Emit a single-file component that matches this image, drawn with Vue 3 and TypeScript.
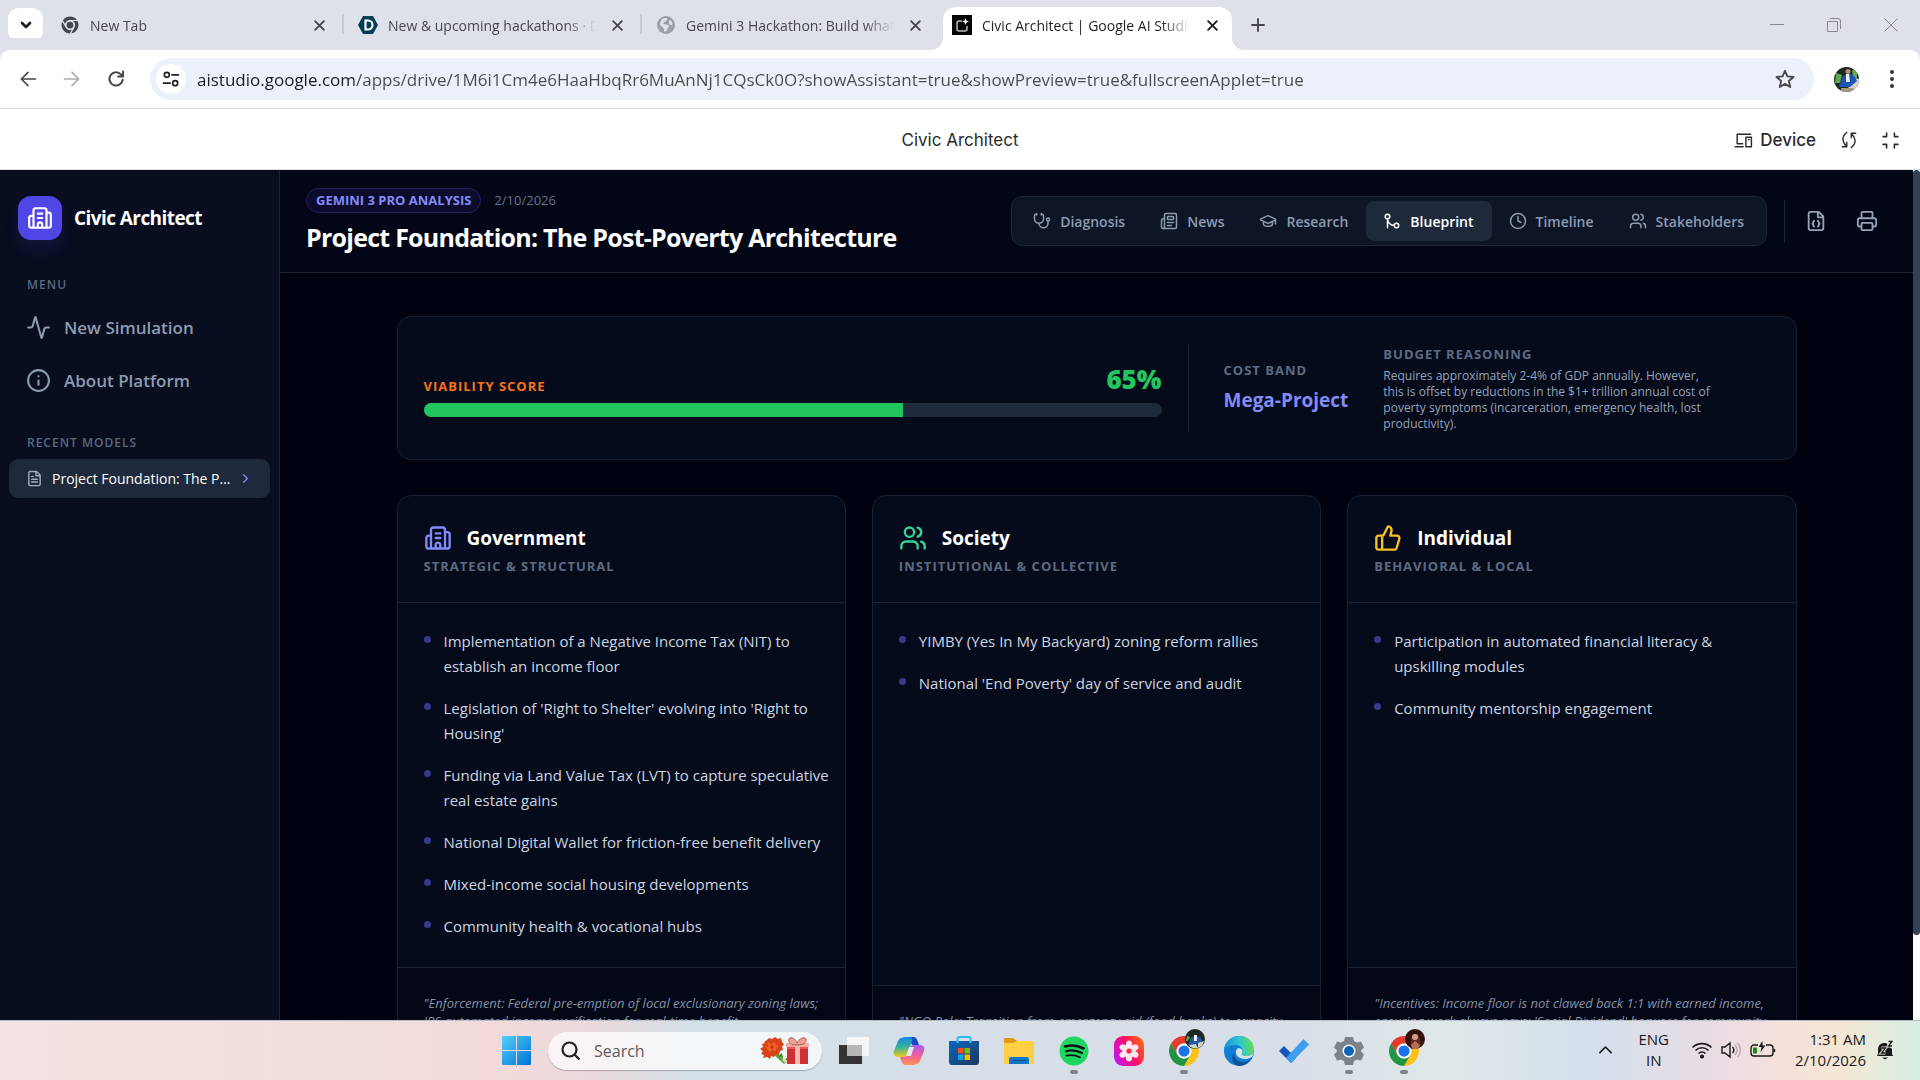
<script setup lang="ts">
import { h } from 'vue'

const ring = (cx: number, cy: number, r: number): string =>
  `M${cx - r} ${cy}a${r} ${r} 0 1 0 ${2 * r} 0a${r} ${r} 0 1 0 ${-2 * r} 0`

const page =
  'M6 22a2 2 0 0 1-2-2V4a2 2 0 0 1 2-2h8a2.4 2.4 0 0 1 1.704.706l3.588 3.588A2.4 2.4 0 0 1 20 8v12a2 2 0 0 1-2 2zM14 2v5a1 1 0 0 0 1 1h5'

const glyphs: Record<string, string> = {
  building:
    'M10 12h4M10 8h4M14 21v-3a2 2 0 0 0-4 0v3M6 10H4a2 2 0 0 0-2 2v7a2 2 0 0 0 2 2h16a2 2 0 0 0 2-2V9a2 2 0 0 0-2-2h-2M6 21V5a2 2 0 0 1 2-2h8a2 2 0 0 1 2 2v16',
  activity:
    'M22 12h-2.48a2 2 0 0 0-1.93 1.46l-2.35 8.36a.25.25 0 0 1-.48 0L9.24 2.18a.25.25 0 0 0-.48 0l-2.35 8.36A2 2 0 0 1 4.49 12H2',
  info: ring(12, 12, 10) + 'M12 16v-4M12 8h.01',
  file: page + 'M10 9H8M16 13H8M16 17H8',
  right: 'm9 18 6-6-6-6',
  stethoscope:
    'M11 2v2M5 2v2M5 3H4a2 2 0 0 0-2 2v4a6 6 0 0 0 12 0V5a2 2 0 0 0-2-2h-1M8 15a6 6 0 0 0 12 0v-3' + ring(20, 10, 2),
  news:
    'M15 18h-5M18 14h-8M4 22h16a2 2 0 0 0 2-2V4a2 2 0 0 0-2-2H8a2 2 0 0 0-2 2v16a2 2 0 0 1-4 0v-9a2 2 0 0 1 2-2h2M11 6h6a1 1 0 0 1 1 1v2a1 1 0 0 1-1 1h-6a1 1 0 0 1-1-1V7a1 1 0 0 1 1-1z',
  cap:
    'M21.42 10.922a1 1 0 0 0-.019-1.838L12.83 5.18a2 2 0 0 0-1.66 0L2.6 9.08a1 1 0 0 0 0 1.832l8.57 3.908a2 2 0 0 0 1.66 0zM22 10v6M6 12.5V16a6 3 0 0 0 12 0v-3.5',
  merge: ring(18, 18, 3) + ring(6, 6, 3) + 'M6 21V9a9 9 0 0 0 9 9',
  clock: ring(12, 12, 10) + 'M12 6v6l4 2',
  users:
    'M16 21v-2a4 4 0 0 0-4-4H6a4 4 0 0 0-4 4v2M16 3.128a4 4 0 0 1 0 7.744M22 21v-2a4 4 0 0 0-3-3.87' + ring(9, 7, 4),
  json:
    page +
    'M10 12a1 1 0 0 0-1 1v1a1 1 0 0 1-1 1 1 1 0 0 1 1 1v1a1 1 0 0 0 1 1M14 18a1 1 0 0 0 1-1v-1a1 1 0 0 1 1-1 1 1 0 0 1-1-1v-1a1 1 0 0 0-1-1',
  printer:
    'M6 18H4a2 2 0 0 1-2-2v-5a2 2 0 0 1 2-2h16a2 2 0 0 1 2 2v5a2 2 0 0 1-2 2h-2M6 9V3a1 1 0 0 1 1-1h10a1 1 0 0 1 1 1v6M7 14h10a1 1 0 0 1 1 1v6a1 1 0 0 1-1 1H7a1 1 0 0 1-1-1v-6a1 1 0 0 1 1-1z',
  thumb:
    'M7 10v12M15 5.88 14 10h5.83a2 2 0 0 1 1.92 2.56l-2.33 8A2 2 0 0 1 17.5 22H4a2 2 0 0 1-2-2v-8a2 2 0 0 1 2-2h2.76a2 2 0 0 0 1.79-1.11L12 2a3.13 3.13 0 0 1 3 3.88Z',
  close: 'M5 5l14 14M19 5L5 19',
  plus: 'M12 4v16M4 12h16',
  down: 'M6 9l6 6 6-6',
  up: 'M3 17l9-9 9 9',
  back: 'M21 12H4M12 4l-8 8 8 8',
  forward: 'M3 12h17M12 4l8 8-8 8',
  reload: 'M20 13a8 8 0 1 1-2-6.500l2 2M20.500 3v6h-6',
  tune: ring(7, 7, 3) + 'M13 7h8M3 17h8' + ring(17, 17, 3),
  star: 'M12 3l2.600 6.200 6.700.6-5.100 4.400 1.500 6.600L12 17.300l-5.700 3.500 1.500-6.600-5.100-4.400 6.700-.6z',
  device: 'M21 4H4v12M1.500 20h10M4 16h7M15 8h7v12h-7zM18 11h1',
  sync: 'M9 2C5 5 3.500 8 4 12c.5 4 2 6 5 8.500M9 15v6H3M15 22c4-3 5.500-6 5-10-.5-4-2-6-5-8.500M15 9V3h6',
  shrink: 'M6.500 1.500v5h-5M17.500 1.500v5h5M6.500 22.500v-5h-5M17.500 22.500v-5h5',
}

const Glyph = (props: { name: string; size: number; weight?: number }) =>
  h(
    'svg',
    {
      width: props.size,
      height: props.size,
      viewBox: '0 0 24 24',
      fill: 'none',
      stroke: 'currentColor',
      'stroke-width': props.weight ?? 2,
      'stroke-linecap': 'round',
      'stroke-linejoin': 'round',
      'aria-hidden': 'true',
    },
    [h('path', { d: glyphs[props.name] })],
  )
Glyph.props = ['name', 'size', 'weight']

const Chrome = (props: { size: number; mono?: boolean }) => {
  const tone = props.mono ? ['#44474b', '#44474b', '#44474b', '#44474b'] : ['#e33b2e', '#fbc116', '#229342', '#1a73e8']
  const edge = props.mono ? { stroke: '#dee1e9', 'stroke-width': 2.5 } : {}
  return h('svg', { width: props.size, height: props.size, viewBox: '4 4 40 40', 'aria-hidden': 'true' }, [
    h('path', { ...edge, fill: tone[0], d: 'M6.68 14A20 20 0 0 1 41.32 14H24A10 10 0 0 0 15.34 29Z' }),
    h('path', { ...edge, fill: tone[1], d: 'M41.32 14A20 20 0 0 1 24 44L32.66 29A10 10 0 0 0 24 14Z' }),
    h('path', { ...edge, fill: tone[2], d: 'M24 44A20 20 0 0 1 6.68 14L15.34 29A10 10 0 0 0 32.66 29Z' }),
    h('circle', { cx: 24, cy: 24, r: 10, fill: props.mono ? '#dee1e9' : '#fff' }),
    h('circle', { cx: 24, cy: 24, r: 7.5, fill: tone[3] }),
  ])
}
Chrome.props = ['size', 'mono']

const browserTabs = [
  { icon: 'chrome', title: 'New Tab', divider: true },
  { icon: 'devpost', title: 'New & upcoming hackathons · Devpost', divider: true },
  { icon: 'globe', title: 'Gemini 3 Hackathon: Build what’s next', divider: false },
  { icon: 'studio', title: 'Civic Architect | Google AI Studio', divider: false, active: true },
]
const address =
  'aistudio.google.com/apps/drive/1M6i1Cm4e6HaaHbqRr6MuAnNj1CQsCk0O?showAssistant=true&showPreview=true&fullscreenApplet=true'

const sections = [
  { icon: 'stethoscope', label: 'Diagnosis' },
  { icon: 'news', label: 'News' },
  { icon: 'cap', label: 'Research' },
  { icon: 'merge', label: 'Blueprint', active: true },
  { icon: 'clock', label: 'Timeline' },
  { icon: 'users', label: 'Stakeholders' },
]

const score = 65

const pillars = [
  {
    key: 'gov',
    icon: 'building',
    title: 'Government',
    subtitle: 'STRATEGIC & STRUCTURAL',
    items: [
      'Implementation of a Negative Income Tax (NIT) to establish an income floor',
      "Legislation of 'Right to Shelter' evolving into 'Right to Housing'",
      'Funding via Land Value Tax (LVT) to capture speculative real estate gains',
      'National Digital Wallet for friction-free benefit delivery',
      'Mixed-income social housing developments',
      'Community health & vocational hubs',
    ],
    note: '"Enforcement: Federal pre-emption of local exclusionary zoning laws; IRS automated income verification for real-time benefit',
  },
  {
    key: 'soc',
    icon: 'users',
    title: 'Society',
    subtitle: 'INSTITUTIONAL & COLLECTIVE',
    items: ['YIMBY (Yes In My Backyard) zoning reform rallies', "National 'End Poverty' day of service and audit"],
    note: '"NGO Role: Transition from emergency aid (food banks) to capacity',
  },
  {
    key: 'ind',
    icon: 'thumb',
    title: 'Individual',
    subtitle: 'BEHAVIORAL & LOCAL',
    items: ['Participation in automated financial literacy & upskilling\u00a0modules', 'Community mentorship engagement'],
    note: "\"Incentives: Income floor is not clawed back 1:1 with earned income, ensuring work always pays; 'Social Dividend' bonuses for community",
  },
]
</script>

<template>
  <div class="screen">
    <div class="tabstrip">
      <button class="tab-search" aria-label="Search tabs"><Glyph name="down" :size="16" :weight="4" /></button>
      <div v-for="tab in browserTabs" :key="tab.title" class="tab" :class="{ active: tab.active, divided: tab.divider }">
        <span class="favicon">
          <Chrome v-if="tab.icon === 'chrome'" :size="18" :mono="true" />
          <svg v-else-if="tab.icon === 'devpost'" width="20" height="20" viewBox="0 0 20 20" aria-hidden="true">
            <path d="M5 1h10l5 9-5 9H5l-5-9z" fill="#003e54" />
            <path d="M7.500 5.500h2.500a4.500 4.500 0 0 1 0 9H7.500z" fill="none" stroke="#fff" stroke-width="2.200" />
          </svg>
          <svg v-else-if="tab.icon === 'globe'" width="18" height="18" viewBox="0 0 18 18" aria-hidden="true">
            <circle cx="9" cy="9" r="9" fill="#9aa0a6" />
            <path d="M8 2c3 0 3 2 1 3S5 7 7 8s5 0 5 2-2 2-2 4-3 2-3 0-1-3-3-4-1-7 4-8zM13 4c2 1 3 4 2 5s-3-1-3-2 0-3 1-3z" fill="#dee1e9" />
          </svg>
          <svg v-else width="20" height="20" viewBox="0 0 20 20" aria-hidden="true">
            <path d="M0 0h20v20H0z" fill="#050505" />
            <path d="M10 6H7a2 2 0 0 0-2 2v6a2 2 0 0 0 2 2h6a2 2 0 0 0 2-2v-3" fill="none" stroke="#bbb" stroke-width="1.500" />
            <path d="M13.500 3l1 2.500L17 6.500l-2.500 1-1 2.500-1-2.500-2.500-1 2.500-1z" fill="#fff" />
          </svg>
        </span>
        <button class="tab-title">{{ tab.title }}</button>
        <button class="tab-close" aria-label="Close tab"><Glyph name="close" :size="15" :weight="3" /></button>
      </div>
      <button class="tab-new" aria-label="New tab"><Glyph name="plus" :size="18" :weight="2.5" /></button>
      <div class="window-controls">
        <button aria-label="Minimize"><svg width="14" height="14"><path d="M0 6.500h14" stroke="#888" /></svg></button>
        <button aria-label="Restore">
          <svg width="14" height="14" fill="none" stroke="#888"><path d="M.5 3.500h10v10H.5zM3 .5h8a2.500 2.500 0 0 1 2.500 2.500v8" /></svg>
        </button>
        <button aria-label="Close"><svg width="14" height="14"><path d="M.5.5l13 13M13.500.5l-13 13" stroke="#888" /></svg></button>
      </div>
    </div>

    <div class="toolbar">
      <button class="tool" aria-label="Back"><Glyph name="back" :size="20" /></button>
      <button class="tool faded" aria-label="Forward"><Glyph name="forward" :size="20" /></button>
      <button class="tool" aria-label="Reload"><Glyph name="reload" :size="20" :weight="2.4" /></button>
      <div class="omnibox">
        <button class="site-info" aria-label="View site information"><Glyph name="tune" :size="20" /></button>
        <input class="address" type="text" aria-label="Address and search bar" :value="address" />
        <button class="star" aria-label="Bookmark this tab"><Glyph name="star" :size="22" /></button>
      </div>
      <button class="profile" aria-label="Profile">
        <svg width="25" height="25" viewBox="0 0 25 25" aria-hidden="true">
          <clipPath id="pf"><circle cx="12.500" cy="12.500" r="12.500" /></clipPath>
          <g clip-path="url(#pf)">
            <path d="M0 0h25v25H0z" fill="#1c2b21" />
            <path d="M2 6l6 2-2 8H1zM18 3h5v8h-4z" fill="#62a84f" />
            <path d="M18 10l7 2v10H14z" fill="#d8d3ce" />
            <path d="M9 9l6-3 6 4 2 4-7 6H5l2-6z" fill="#1c54b4" />
            <path d="M12 7h3l1 8h-4z" fill="#f0f3f8" />
            <circle cx="14" cy="4.500" r="2.500" fill="#b98e70" />
            <path d="M7 21h12v4H7z" fill="#a8977f" />
          </g>
        </svg>
      </button>
      <button class="more" aria-label="Menu">
        <svg width="6" height="20" fill="#333"><circle cx="3" cy="3" r="2" /><circle cx="3" cy="10" r="2" /><circle cx="3" cy="17" r="2" /></svg>
      </button>
    </div>

    <div class="preview-bar">
      <span></span>
      <span class="preview-title">Civic Architect</span>
      <div class="preview-tools">
        <button><Glyph name="device" :size="19" :weight="1.800" />Device</button>
        <button aria-label="Reload preview"><Glyph name="sync" :size="18" :weight="1.900" /></button>
        <button aria-label="Exit full screen"><Glyph name="shrink" :size="17" :weight="2.200" /></button>
      </div>
    </div>

    <div class="app">
      <aside class="sidebar">
        <div class="brand">
          <span class="brand-mark"><Glyph name="building" :size="26" /></span>
          <span>Civic Architect</span>
        </div>
        <h2 class="side-label">MENU</h2>
        <nav class="menu">
          <a href="#new"><Glyph name="activity" :size="25" />New Simulation</a>
          <a href="#about"><Glyph name="info" :size="25" />About Platform</a>
        </nav>
        <h2 class="side-label recent">RECENT MODELS</h2>
        <a class="model" href="#model">
          <Glyph name="file" :size="17" />
          <span>Project Foundation: The Post-Poverty Architecture</span>
          <Glyph name="right" class="model-arrow" :size="15" />
        </a>
      </aside>

      <main class="main">
        <header class="head">
          <div class="head-text">
            <div class="meta">
              <span class="badge">GEMINI 3 PRO ANALYSIS</span>
              <time>2/10/2026</time>
            </div>
            <h1>Project Foundation: The Post-Poverty Architecture</h1>
          </div>
          <div class="head-tools">
            <nav class="sections">
              <button v-for="s in sections" :key="s.label" :class="{ active: s.active }">
                <Glyph :name="s.icon" :size="18" />{{ s.label }}
              </button>
            </nav>
            <div class="exports">
              <button aria-label="Export JSON"><Glyph name="json" :size="22" /></button>
              <button aria-label="Print"><Glyph name="printer" :size="22" /></button>
            </div>
          </div>
        </header>

        <div class="content">
          <section class="summary">
            <div class="score">
              <div class="score-row">
                <span class="score-label">VIABILITY SCORE</span>
                <span class="score-value">{{ score }}%</span>
              </div>
              <div class="track"><div class="fill" :style="{ width: score + '%' }"></div></div>
            </div>
            <div class="cost">
              <div class="band">
                <h3>COST BAND</h3>
                <strong>Mega-Project</strong>
              </div>
              <div class="reason">
                <h3>BUDGET REASONING</h3>
                <p>
                  Requires approximately 2-4% of GDP annually. However,<br />
                  this is offset by reductions in the $1+ trillion annual cost of<br />
                  poverty symptoms (incarceration, emergency health, lost<br />
                  productivity).
                </p>
              </div>
            </div>
          </section>

          <div class="pillars">
            <article v-for="p in pillars" :key="p.key" class="pillar" :class="p.key">
              <header>
                <div class="pillar-title"><Glyph :name="p.icon" :size="28" /><h2>{{ p.title }}</h2></div>
                <p>{{ p.subtitle }}</p>
              </header>
              <ul>
                <li v-for="item in p.items" :key="item">{{ item }}</li>
              </ul>
              <footer>{{ p.note }}</footer>
            </article>
          </div>
        </div>
      </main>
      <div class="scrollbar"><div class="thumb"></div></div>
    </div>

    <div class="taskbar">
      <span></span>
      <div class="dock">
        <button class="slot" aria-label="Start">
          <svg width="29" height="29" viewBox="0 0 29 29">
            <defs><linearGradient id="win" x1="0" y1="0" x2="1" y2="1"><stop stop-color="#52d0fb" /><stop offset="1" stop-color="#0072d4" /></linearGradient></defs>
            <path d="M1 0h13v14H0V1a1 1 0 0 1 1-1zM15 0h13a1 1 0 0 1 1 1v13H15zM0 15h14v14H1a1 1 0 0 1-1-1zM15 15h14v13a1 1 0 0 1-1 1H15z" fill="url(#win)" />
          </svg>
        </button>
        <label class="search">
          <svg width="20" height="20" viewBox="0 0 20 20" fill="none" stroke="#222" stroke-width="2.200" aria-hidden="true"><circle cx="8.500" cy="8.500" r="7" /><path d="M13.500 13.500l5 5" /></svg>
          <input type="text" placeholder="Search" aria-label="Search" />
          <svg width="50" height="28" viewBox="0 0 50 28" aria-hidden="true">
            <path d="M15 14l13 11-3 2-11-10z" fill="#56a637" />
            <path d="M19 19l4-3 1 5zM26 22l4-2-1 6z" fill="#3e8b2b" />
            <path d="M23 23l3-2 2 3-2 2z" fill="#e9dcae" />
            <path d="M5 5l3-2 2-2 3 1 3-2 3 2 3-1 1 4 2 2-2 3 1 3-3 1-1 4-3-1-2 3-3-1-1 3-3-2-4 1 1-3-3-1 2-3-3-2 3-2-1-3 3-1z" fill="#d9431a" />
            <path d="M9 5l3 2 4-2 1 3 3 1-3 2v3l-4-1-3 2-1-3-3-1 3-2z" fill="#ee6026" />
            <path d="M13 8l2 2-2 2-2-2z" fill="#c7330f" />
            <path d="M28 6h21v9H28z" fill="#e8544f" />
            <path d="M28 12h21v15H28z" fill="#cf3036" />
            <path d="M27 6h23v4H27z" fill="#f4aaa0" />
            <path d="M36 6h5v21h-5z" fill="#f7b8ae" />
            <path d="M38 8c-6 0-9-2-8-6 2-3 7 0 8 4 2-4 7-7 9-4 1 4-3 6-9 6z" fill="#f2a196" stroke="#a85f54" />
          </svg>
        </label>
        <button class="slot" aria-label="Task view">
          <svg width="30" height="30" viewBox="0 0 30 30">
            <path d="M0 9h23v19H0z" fill="#333" /><path d="M8 1h22v19H8z" fill="#f6f6f6" /><path d="M8 9h15v11H8z" fill="#b5b6b7" />
          </svg>
        </button>
        <button class="slot" aria-label="Copilot">
          <svg width="32" height="30" viewBox="0 0 32 30">
            <defs>
              <linearGradient id="cpa" x1="0" y1="0" x2="0" y2="1"><stop stop-color="#1a86e8" /><stop offset=".5" stop-color="#36b39a" /><stop offset="1" stop-color="#f3c916" /></linearGradient>
              <linearGradient id="cpb" x1="0" y1="0" x2="0" y2="1"><stop stop-color="#a75cf0" /><stop offset=".5" stop-color="#ee5d9b" /><stop offset="1" stop-color="#fb9552" /></linearGradient>
            </defs>
            <path d="M16 1h4c3 0 4 2 5 5l1 3h-6c-2 0-2-3-4-8z" fill="#1b48c4" />
            <path d="M9 2c1-1 2-1 4-1h4c2 0 3 2 2 4l-4 12c-1 3-2 4-5 4H5c-4 0-5-3-4-6L5 5c1-2 2-3 4-3z" fill="url(#cpa)" />
            <path d="M23 28c-1 1-2 1-4 1h-6c-3 0-4-2-5-5l-1-3h3c3 0 4-1 5-4l2-5c1-3 2-3 5-3h5c4 0 5 3 4 6l-4 10c-1 2-2 3-4 3z" fill="url(#cpb)" />
            <path d="M16 11h5l-3 9h-5z" fill="#e8e6f0" />
          </svg>
        </button>
        <button class="slot" aria-label="Store">
          <svg width="30" height="30" viewBox="0 0 30 30">
            <defs><linearGradient id="sto" x1="0" y1="0" x2="1" y2="1"><stop stop-color="#0669bd" /><stop offset="1" stop-color="#24355e" /></linearGradient></defs>
            <path d="M8.500 7V3a2 2 0 0 1 2-2h9a2 2 0 0 1 2 2v4" fill="none" stroke="#28bdf2" stroke-width="2" />
            <path d="M0 5h30v21a3 3 0 0 1-3 3H3a3 3 0 0 1-3-3z" fill="url(#sto)" />
            <path d="M7.500 5h2v2h-2zM20.500 5h2v2h-2z" fill="#38c7f7" />
            <path d="M9 12h5.500v5.500H9z" fill="#f25022" /><path d="M15.500 12H21v5.500h-5.500z" fill="#7fba00" /><path d="M9 18.500h5.500V24H9z" fill="#00a4ef" /><path d="M15.500 18.500H21V24h-5.500z" fill="#ffb900" />
          </svg>
        </button>
        <button class="slot" aria-label="File Explorer">
          <svg width="30" height="28" viewBox="0 0 30 28">
            <path d="M0 2a1 1 0 0 1 1-1h8l4 3h16v10H0z" fill="#dc9a0d" />
            <path d="M0 6h9l4-2h16a1 1 0 0 1 1 1v22H1a1 1 0 0 1-1-1z" fill="#ffcf45" />
            <path d="M5 27v-5a2 2 0 0 1 2-2h16a2 2 0 0 1 2 2v5z" fill="#1176c9" /><path d="M9 23.500h13" stroke="#0b4e8c" />
          </svg>
        </button>
        <button class="slot running" aria-label="Spotify">
          <svg width="30" height="30" viewBox="0 0 30 30" fill="none" stroke="#111" stroke-linecap="round">
            <circle cx="15" cy="15" r="14.500" fill="#1ed760" stroke="none" />
            <path d="M6 10.500c6-1.700 13-1 18.500 2" stroke-width="2.600" /><path d="M7 15.300c5-1.500 11-.8 16 1.800" stroke-width="2.200" /><path d="M7.500 19.700c5-1.200 9-.6 13.500 1.700" stroke-width="1.800" />
          </svg>
        </button>
        <button class="slot" aria-label="Gallery">
          <svg width="30" height="30" viewBox="0 0 30 30">
            <defs><linearGradient id="gal" x1="0" y1=".7" x2="1" y2=".2"><stop stop-color="#c514e8" /><stop offset=".5" stop-color="#fb0d6c" /><stop offset="1" stop-color="#ff6a0a" /></linearGradient></defs>
            <rect width="30" height="30" rx="9" fill="url(#gal)" />
            <ellipse v-for="n in 6" :key="n" cx="15" cy="9" rx="3.200" ry="4.500" fill="#ffe9ee" :transform="`rotate(${n * 60} 15 15)`" />
            <circle cx="15" cy="15" r="2.600" fill="#fa2a3d" />
          </svg>
        </button>
        <button class="slot running" aria-label="Chrome, first profile">
          <Chrome :size="30" />
          <svg class="who" width="20" height="20" viewBox="0 0 20 20">
            <circle cx="10" cy="10" r="10" fill="#1d2a22" /><path d="M6 9l5-3 5 3 1 4-6 3H3z" fill="#2458ad" /><path d="M9 6h3v6H9z" fill="#eef2f6" /><path d="M13 14l6-2c-1 4-3 6-6 7z" fill="#cfd3c9" /><path d="M4 16l7-1 2 4c-4 1-7 0-9-3z" fill="#cfd3c9" /><path d="M2 7l3 1-2 4H1z" fill="#62a84f" />
          </svg>
        </button>
        <button class="slot" aria-label="Edge">
          <svg width="30" height="30" viewBox="0 0 30 30">
            <defs>
              <linearGradient id="ed" x1="0" y1=".5" x2="1" y2=".4"><stop stop-color="#1b8fdb" /><stop offset=".5" stop-color="#2cc3d2" /><stop offset="1" stop-color="#67e04c" /></linearGradient>
            </defs>
            <circle cx="15" cy="15" r="15" fill="#0f7fd6" />
            <path d="M0 14C1 6 7 0 15 0c9 0 15 6 15 13 0 5-4 7-8 7-3 0-5-1-4-3 1-3 0-7-5-8-5 0-10 1-13 5z" fill="url(#ed)" />
            <path d="M10 17c0 7 6 10 11 9 3-1 5-2 7-4-3 5-8 8-13 8-6-1-9-8-5-13z" fill="#134f91" />
            <path d="M14 12c-3 2-3 8 2 10 4 2 8 1 12-1l2-5c-2 3-5 4-8 4-4 0-5-2-4-3 1-2 0-5-4-5z" fill="#d9e0e8" />
          </svg>
        </button>
        <button class="slot" aria-label="To Do">
          <svg width="30" height="26" viewBox="0 0 30 26"><path d="M0 13l5-5 12 12-5 5z" fill="#1a56b8" /><path d="M7 20L24.500 1 30 6.500 12 25z" fill="#3f9fee" /></svg>
        </button>
        <button class="slot running" aria-label="Settings">
          <svg width="30" height="30" viewBox="0 0 30 30">
            <path d="M11 1h8l1 4 3 1.500 4-1 3 6-3 3v1l3 3-3 6-4-1-3 1.500-1 4h-8l-1-4-3-1.500-4 1-3-6 3-3v-1l-3-3 3-6 4 1L10 5z" fill="#7c838b" />
            <circle cx="15" cy="15" r="6.500" fill="#fff" /><circle cx="15" cy="15" r="5" fill="#0c63b5" />
          </svg>
        </button>
        <button class="slot running" aria-label="Chrome, second profile">
          <Chrome :size="30" />
          <svg class="who" width="20" height="20" viewBox="0 0 20 20">
            <circle cx="10" cy="10" r="10" fill="#33120e" /><path d="M6 20c-1-8 0-14 4-15s6 5 5 13z" fill="#6d2a1c" /><circle cx="10" cy="8" r="3" fill="#d39b80" /><path d="M6 16l4-4 5 4-2 4H8z" fill="#b77158" />
          </svg>
        </button>
      </div>
      <div class="tray">
        <button class="tray-up" aria-label="Show hidden icons"><Glyph name="up" :size="15" :weight="2.600" /></button>
        <button class="lang">ENG<br />IN</button>
        <button class="status" aria-label="Network, volume and battery">
          <svg width="22" height="18" viewBox="0 0 22 18" fill="none" stroke="#1a1a1a" stroke-width="1.600">
            <path d="M1.500 6.500a13.500 13.500 0 0 1 19 0M4.500 9.500a9.200 9.200 0 0 1 13 0M7.500 12.500a5 5 0 0 1 7 0" /><circle cx="11" cy="15.500" r="1.300" fill="#1a1a1a" />
          </svg>
          <svg width="21" height="18" viewBox="0 0 21 18" fill="none" stroke="#1a1a1a" stroke-width="1.400">
            <path d="M1 6h3l5-4v14l-5-4H1zM11.500 6a4 4 0 0 1 0 6" /><path d="M14 4a7 7 0 0 1 0 10M16.500 2a10 10 0 0 1 0 14" stroke="#b5abac" />
          </svg>
          <svg width="26" height="18" viewBox="0 0 26 18" fill="none" stroke="#1a1a1a" stroke-width="1.400">
            <path d="M8 4H4a3 3 0 0 0-3 3v5a3 3 0 0 0 3 3h16a3 3 0 0 0 3-3V7a3 3 0 0 0-3-3h-4M24.500 8v3" /><path d="M3 6.500h4v6H3z" fill="#128a12" stroke="none" /><path d="M12.500 0L8.500 6h3l-1 5 5-6.500h-3z" fill="#1a1a1a" stroke="none" />
          </svg>
        </button>
        <button class="clock">1:31 AM<br />2/10/2026</button>
        <button class="bell" aria-label="Do not disturb">
          <svg width="18" height="20" viewBox="0 0 18 20">
            <path d="M2 14V9a6 6 0 0 1 6-6h2l6 6v5l1 2H1zM6 17.500h6l-3 2z" fill="#1a1a1a" />
            <path d="M5.500 8h4l-4 5h4M12.500 1.500H16L12.500 6H16" fill="none" stroke="#f1ead9" stroke-width="3" /><path d="M5.500 8h4l-4 5h4M12.500 1.500H16L12.500 6H16" fill="none" stroke="#1a1a1a" stroke-width="1.300" />
          </svg>
        </button>
      </div>
    </div>
  </div>
</template>

<style>
body {
  margin: 0;
}
</style>

<style scoped>
.screen {
  display: flex;
  flex-direction: column;
  height: 100vh;
  overflow: hidden;
  background: #fff;
  font-family: 'Open Sans', 'Noto Sans', sans-serif;
}
* {
  box-sizing: border-box;
}
button {
  display: flex;
  align-items: center;
  padding: 0;
  border: 0;
  background: none;
  color: inherit;
  font: inherit;
}
input {
  min-width: 0;
  padding: 0;
  border: 0;
  outline: 0;
  background: none;
  font: inherit;
}
h1, h2, h3, p, ul {
  margin: 0;
  padding: 0;
}
a {
  text-decoration: none;
}
svg {
  flex: none;
}

/* browser tabs */
.tabstrip {
  display: flex;
  align-items: center;
  height: 50px;
  padding-left: 8px;
  background: #dee1e9;
  color: #45474a;
}
.tab-search {
  justify-content: center;
  width: 35px;
  height: 34px;
  margin-right: 3px;
  border-radius: 11px;
  background: #fff;
  color: #1f1f1f;
}
.tab {
  position: relative;
  display: flex;
  flex: 0 1 298px;
  align-items: center;
  gap: 10px;
  min-width: 0;
  height: 50px;
  padding: 0 17px 0 14px;
}
.divided {
  padding-right: 15px;
  border-image: linear-gradient(transparent 14px, #c6c8cc 14px, #c6c8cc 34px, transparent 34px) 1;
  border-right: 2px solid;
}
.favicon {
  display: flex;
  flex: none;
  justify-content: center;
  width: 20px;
}
.tab-title {
  flex: 1;
  overflow: hidden;
  font-size: 14px;
  white-space: nowrap;
  mask-image: linear-gradient(to left, transparent 4px, #000 34px);
}
.active.tab {
  align-self: flex-end;
  flex-basis: 289px;
  height: 43px;
  margin: 0 6px 0 3px;
  padding: 0 12px 7px 9px;
  border-radius: 13px 13px 0 0;
  background: #fff;
  color: #1f1f1f;
}
.active.tab::before,
.active.tab::after {
  position: absolute;
  bottom: 0;
  width: 13px;
  height: 13px;
  content: '';
}
.active.tab::before {
  right: 100%;
  background: radial-gradient(circle at 0 0, transparent 13px, #fff 13px);
}
.active.tab::after {
  left: 100%;
  background: radial-gradient(circle at 100% 0, transparent 13px, #fff 13px);
}
.tab-new {
  margin-left: 11px;
}
.window-controls {
  display: flex;
  gap: 43px;
  margin-left: auto;
  padding-right: 22px;
}

/* address row */
.toolbar {
  display: flex;
  align-items: center;
  height: 59px;
  padding-left: 18px;
  border-bottom: 1px solid #dfdfdf;
  border-radius: 10px 10px 0 0;
  background: #fff;
  box-shadow: 0 -12px 0 #dee1e9;
  color: #474747;
}
.tool {
  margin-right: 24px;
}
.faded {
  color: #ababab;
}
.omnibox {
  display: flex;
  flex: 1;
  align-items: center;
  height: 42px;
  padding: 0 18px 0 6px;
  border-radius: 21px;
  background: #ebf0fa;
}
.site-info {
  justify-content: center;
  width: 30px;
  height: 30px;
  margin-right: 11px;
  border-radius: 15px;
  background: #fff;
  color: #1f1f1f;
}
.address {
  flex: 1;
  background: linear-gradient(90deg, #1b1b1b 157px, #4a4a4a 157px);
  background-clip: text;
  color: transparent;
  font-size: 17px;
}
.profile {
  margin: 0 30px 0 20px;
}
.more {
  margin-right: 25px;
}

/* preview title */
.preview-bar {
  display: grid;
  grid-template-columns: 1fr auto 1fr;
  align-items: center;
  height: 61px;
  padding-top: 2px;
  border-bottom: 1px solid #dfdfdf;
  color: #2b2b2e;
  font-family: Inter, sans-serif;
  font-size: 17px;
}
.preview-tools {
  display: flex;
  justify-content: flex-end;
  gap: 24px;
  padding-right: 21px;
  font-weight: 500;
}
.preview-tools button {
  gap: 7px;
}

/* application */
.app {
  display: flex;
  flex: 1;
  min-height: 0;
  overflow: hidden;
  background: #01020f;
}
.sidebar {
  flex: none;
  width: 280px;
  padding: 26px 9px;
  border-right: 1px solid #1b2437;
  background: #080d1f;
  color: #94a3b8;
}
.brand {
  display: flex;
  align-items: center;
  gap: 12px;
  margin-left: 9px;
  color: #fff;
  font-size: 19px;
  font-weight: 700;
  letter-spacing: -0.03em;
}
.brand-mark {
  display: flex;
  align-items: center;
  justify-content: center;
  width: 44px;
  height: 44px;
  border-radius: 13px;
  background: #4f46e5;
  box-shadow: 0 11px 16px rgba(79, 70, 229, 0.12);
}
.side-label {
  margin: 36px 18px 0;
  color: #5a687e;
  font-size: 12px;
  font-weight: 600;
  letter-spacing: 1px;
  line-height: 18px;
}
.menu {
  display: flex;
  flex-direction: column;
  gap: 9px;
  margin-top: 11px;
}
.menu a {
  display: flex;
  align-items: center;
  gap: 13px;
  height: 44px;
  padding-left: 17px;
  color: #8d9bb0;
  font-size: 17px;
  font-weight: 600;
}
.recent {
  margin-top: 32px;
}
.model {
  display: flex;
  align-items: center;
  gap: 9px;
  height: 39px;
  margin-top: 7px;
  padding: 0 17px;
  border-radius: 9px;
  background: #1e293b;
  color: #a3afc0;
}
.model span {
  flex: 1;
  overflow: hidden;
  color: #fff;
  font-size: 14px;
  text-overflow: ellipsis;
  white-space: nowrap;
}
.model-arrow {
  margin-left: -7px;
  color: #818cf8;
}
.main {
  flex: 1;
  min-width: 0;
}
.head {
  display: flex;
  align-items: center;
  justify-content: space-between;
  height: 103px;
  padding: 0 35px 0 26px;
  border-bottom: 1px solid #1b2437;
  background: #030616;
}
.meta {
  display: flex;
  align-items: center;
  gap: 13px;
  color: #64748b;
  font-size: 13px;
}
.badge {
  padding: 0 9px;
  border: 1px solid #24205e;
  border-radius: 13px;
  background: #0c0b2b;
  color: #818cf8;
  font-weight: 700;
  line-height: 23px;
}
h1 {
  margin: 7px 0 1px;
  color: #fff;
  font-size: 25px;
  font-weight: 700;
  letter-spacing: -0.03em;
  line-height: 34px;
}
.head-tools {
  display: flex;
  align-items: center;
  gap: 17px;
}
.sections {
  display: flex;
  height: 50px;
  padding: 4px;
  border: 1px solid #1b2638;
  border-radius: 11px;
  background: #0d1526;
  color: #8d9bb0;
  font-size: 14px;
  font-weight: 600;
}
.sections button {
  gap: 9px;
  padding: 0 18px 0 17px;
  border-radius: 8px;
  white-space: nowrap;
}
.sections .active {
  background: #1e293b;
  color: #fff;
}
.exports {
  display: flex;
  align-items: center;
  gap: 29px;
  height: 43px;
  padding-left: 20px;
  border-left: 1px solid #1b2437;
  color: #94a3b8;
}
.content {
  display: flex;
  flex-direction: column;
  gap: 35px;
  max-width: 1400px;
  margin: 43px auto 0;
}
.summary,
.pillar {
  border: 1px solid #182133;
  border-radius: 14px;
  background: #060b1c;
}
.summary {
  display: flex;
  align-items: center;
  height: 144px;
  padding: 0 26px;
}
.score {
  flex: 1;
}
.score-row {
  display: flex;
  align-items: flex-end;
  justify-content: space-between;
}
.score-label {
  color: #f97316;
  font-size: 13px;
  font-weight: 700;
  letter-spacing: 1px;
  line-height: 26px;
}
.score-value {
  color: #22c55e;
  font-size: 26px;
  font-weight: 800;
  line-height: 40px;
}
.track {
  height: 14px;
  margin-top: 4px;
  overflow: hidden;
  border-radius: 7px;
  background: #1e293b;
}
.fill {
  height: 100%;
  background: #22c55e;
}
.cost {
  display: flex;
  align-items: center;
  gap: 35px;
  width: 582px;
  height: 88px;
  margin-left: 26px;
  padding-left: 35px;
  border-left: 1px solid #1b2437;
}
.cost h3 {
  color: #5d6b82;
  font-size: 13px;
  font-weight: 700;
  letter-spacing: 1px;
  line-height: 18px;
}
.band strong {
  display: block;
  margin-top: 6px;
  color: #818cf8;
  font-size: 19px;
  line-height: 30px;
  white-space: nowrap;
}
.reason p {
  margin-top: 5px;
  color: #94a3b8;
  font-size: 12px;
  line-height: 16px;
  white-space: nowrap;
}
.pillars {
  display: grid;
  grid-template-columns: repeat(3, 1fr);
  gap: 26px;
}
.pillar {
  display: flex;
  flex-direction: column;
  overflow: hidden;
}
.pillar header {
  height: 107px;
  padding: 26px;
  border-bottom: 1px solid #1b2437;
}
.pillar-title {
  display: flex;
  align-items: center;
  gap: 15px;
  height: 32px;
}
.gov .pillar-title {
  color: #818cf8;
}
.soc .pillar-title {
  color: #34d399;
}
.ind .pillar-title {
  color: #fbbf24;
}
.pillar h2 {
  color: #fff;
  font-size: 19px;
  font-weight: 700;
}
.pillar header p {
  margin-top: 3px;
  color: #5d6b82;
  font-size: 13px;
  font-weight: 700;
  letter-spacing: 1px;
  line-height: 18px;
}
.pillar ul {
  display: flex;
  flex: 1;
  flex-direction: column;
  gap: 17px;
  padding: 26px 9px 28px 26px;
  list-style: none;
}
.pillar li {
  position: relative;
  padding-left: 20px;
  color: #cbd5e1;
  font-size: 15px;
  line-height: 25px;
}
.pillar li::before {
  position: absolute;
  top: 7px;
  left: 0;
  width: 7px;
  height: 7px;
  border-radius: 4px;
  background: #383a8c;
  content: '';
}
.pillar footer {
  padding: 26px 17px 26px 26px;
  border-top: 1px solid #1b2437;
  background: #030716;
  color: #8391a6;
  font-size: 13px;
  font-style: italic;
  line-height: 18px;
}
.scrollbar {
  flex: none;
  width: 7px;
  background: #fff;
}
.thumb {
  height: 90%;
  border-radius: 4px;
  background: #334155;
}

/* taskbar */
.taskbar {
  display: grid;
  grid-template-columns: 1fr auto 1fr;
  align-items: center;
  height: 60px;
  border-top: 1px solid #b9bdc4;
  background: linear-gradient(90deg, #f1e4e2, #f2dada 26%, #ead8dc 31%, #d3e1e8 36%, #d6dee8 50%, #d9dfe8 68%, #dfe8e9 75%, #d4dfeb 83%, #e8dce4 89%, #f7e0da 93%, #f3e7d4 96%, #d8eee5);
  color: #1a1a1a;
}
.dock {
  display: flex;
  align-items: center;
}
.slot {
  position: relative;
  justify-content: center;
  width: 55px;
  height: 59px;
}
.running::after {
  position: absolute;
  bottom: 6px;
  width: 8px;
  height: 4px;
  border-radius: 2px;
  background: #7f8388;
  content: '';
}
.who {
  position: absolute;
  top: 8px;
  right: 6px;
}
.search {
  display: flex;
  align-items: center;
  gap: 13px;
  width: 274px;
  height: 38px;
  margin: 0 4px;
  padding: 0 13px;
  border-radius: 19px;
  background: rgba(255, 255, 255, 0.7);
  box-shadow: 0 1px 1px rgba(80, 80, 90, 0.4);
  font-size: 16px;
}
.search input {
  flex: 1;
}
.search input::placeholder {
  color: #5c5c5c;
}
.tray {
  display: flex;
  align-items: center;
  justify-content: flex-end;
  padding: 0 26px 2px 0;
  font-size: 15px;
  line-height: 21px;
}
.lang {
  justify-content: center;
  margin: 0 22px 0 25px;
  text-align: center;
}
.status {
  gap: 8px;
  margin-right: 19px;
}
.clock {
  justify-content: flex-end;
  margin-right: 10px;
  text-align: right;
}
</style>
